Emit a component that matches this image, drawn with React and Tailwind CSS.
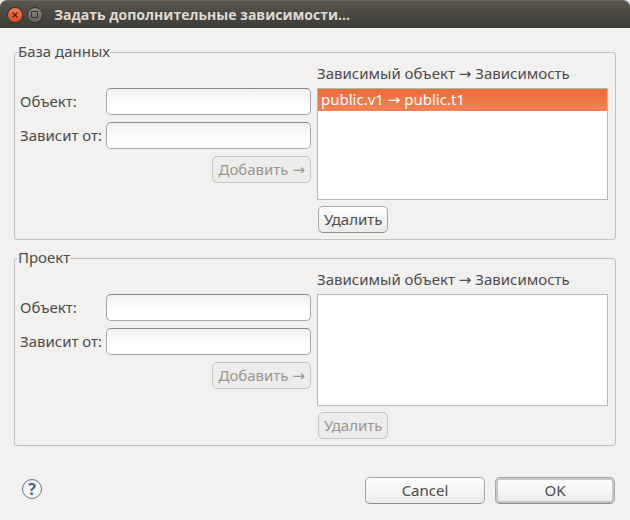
import { useId, useState } from "react";
import clsx from "clsx";

const buttonBase = "h-[27px] rounded-[5px] border px-[5px] pb-0.5 text-center whitespace-nowrap";
const buttonEnabled =
  "border-[#a9a8a5] border-b-[#8d8b88] bg-linear-to-b from-white to-[#ebeae8] text-[#4c4c4c]";
const buttonDisabled = "border-[#c6c4c1] bg-[#eeedec] text-[#999692]";

function Button({ className, disabled, ...props }) {
  return (
    <button
      type="button"
      disabled={disabled}
      className={clsx(buttonBase, disabled ? buttonDisabled : buttonEnabled, className)}
      {...props}
    />
  );
}

function TextField({ label, value, onChange }) {
  const id = useId();
  return (
    <div className="grid grid-cols-[80px_1fr] items-center gap-1.5">
      <label htmlFor={id} className="pb-0.5 whitespace-nowrap">
        {label}
      </label>
      <input
        id={id}
        type="text"
        value={value}
        onChange={(e) => onChange(e.target.value)}
        className="h-[27px] w-full min-w-0 rounded-[5px] border border-[#a9a8a5] border-t-[#8b8986] bg-linear-to-b from-[#f1f1f1] to-white to-60% px-1.5 outline-none"
      />
    </div>
  );
}

function DependencyGroup({ title, initialItems }) {
  const [items, setItems] = useState(initialItems);
  const [selected, setSelected] = useState(0);
  const [source, setSource] = useState("");
  const [target, setTarget] = useState("");
  const captionId = useId();

  const add = () => {
    setItems([...items, `${source} → ${target}`]);
    setSource("");
    setTarget("");
  };

  return (
    <fieldset className="min-w-0 rounded-[3px] border border-[#c3c2bf] pr-[7px] pb-1.5 pl-[5px]">
      <legend className="-ml-0.5 h-5 leading-[18px]">{title}</legend>
      <div className="grid grid-cols-2 gap-1.5">
        <div className="flex flex-col gap-[7px] pt-[26px]">
          <TextField label="Объект:" value={source} onChange={setSource} />
          <TextField label="Зависит от:" value={target} onChange={setTarget} />
          <Button className="self-end" disabled={!source || !target} onClick={add}>
            Добавить →
          </Button>
        </div>
        <div className="flex flex-col items-start gap-1.5 pt-0.5">
          <div className="w-full">
            <div id={captionId} className="pb-1.5 leading-[18px] whitespace-nowrap">
              Зависимый объект → Зависимость
            </div>
            <ul
              role="listbox"
              aria-labelledby={captionId}
              className="h-28 overflow-y-auto border border-[#b9b7b4] bg-white"
            >
              {items.map((item, index) => (
                <li
                  key={item}
                  role="option"
                  aria-selected={index === selected}
                  onClick={() => setSelected(index)}
                  className={clsx(
                    "h-[22px] px-[3px] leading-5",
                    index === selected && "bg-linear-to-b from-[#e96d39] to-[#f58255] text-white",
                  )}
                >
                  {item}
                </li>
              ))}
            </ul>
          </div>
          <Button
            className="ml-px"
            disabled={items.length === 0}
            onClick={() => setItems(items.filter((_, index) => index !== selected))}
          >
            Удалить
          </Button>
        </div>
      </div>
    </fieldset>
  );
}

export default function App() {
  return (
    <main className="flex min-h-screen flex-col bg-[#f2f1f0] font-['Noto_Sans','DejaVu_Sans',sans-serif] text-[15px] leading-5 text-[#4c4c4c]">
      <div className="bg-[#e8e8e8]">
        <header className="flex h-7 items-center gap-1 rounded-t-[7px] border-t border-[#69665d] bg-linear-to-b from-[#58554c] to-[#3d3c37] px-[7px]">
          <button
            type="button"
            aria-label="Закрыть"
            className="size-4 rounded-full border border-[#33312d] bg-linear-to-b from-[#f57e55] to-[#df4a16] text-[#4a2314]"
          >
            <svg viewBox="0 0 14 14" fill="none" stroke="currentColor" strokeWidth="1.3" aria-hidden="true">
              <path d="M4.5 4.5l5 5M9.5 4.5l-5 5" />
            </svg>
          </button>
          <button
            type="button"
            aria-label="Развернуть"
            className="size-4 rounded-full border border-[#33312d] bg-linear-to-b from-[#8b8980] to-[#66645c] text-[#36342f]"
          >
            <svg viewBox="0 0 14 14" fill="none" stroke="currentColor" aria-hidden="true">
              <path d="M3.5 3.5h6v6h-6z" />
            </svg>
          </button>
          <h1 className="ml-[7px] font-['Open_Sans','DejaVu_Sans',sans-serif] text-[14px] font-bold whitespace-nowrap text-[#dfdbd2]">
            Задать дополнительные зависимости...
          </h1>
        </header>
      </div>

      <div className="flex flex-col gap-2 px-3.5 pt-3.5">
        <DependencyGroup title="База данных" initialItems={["public.v1 → public.t1"]} />
        <DependencyGroup title="Проект" initialItems={[]} />
      </div>

      <footer className="mt-auto flex items-start justify-between px-[15px] pb-4">
        <button
          type="button"
          aria-label="Справка"
          className="mt-0.5 ml-[7px] size-5 rounded-full border border-[#5f7396] bg-[#f6f6f7] text-[16px] leading-[18px] font-bold text-[#4b5f87]"
        >
          ?
        </button>
        <div className="flex gap-2.5">
          <Button className="w-[120px]">Cancel</Button>
          <Button className="w-[120px] inset-ring-2 inset-ring-[#c9c7c5]">OK</Button>
        </div>
      </footer>
    </main>
  );
}
